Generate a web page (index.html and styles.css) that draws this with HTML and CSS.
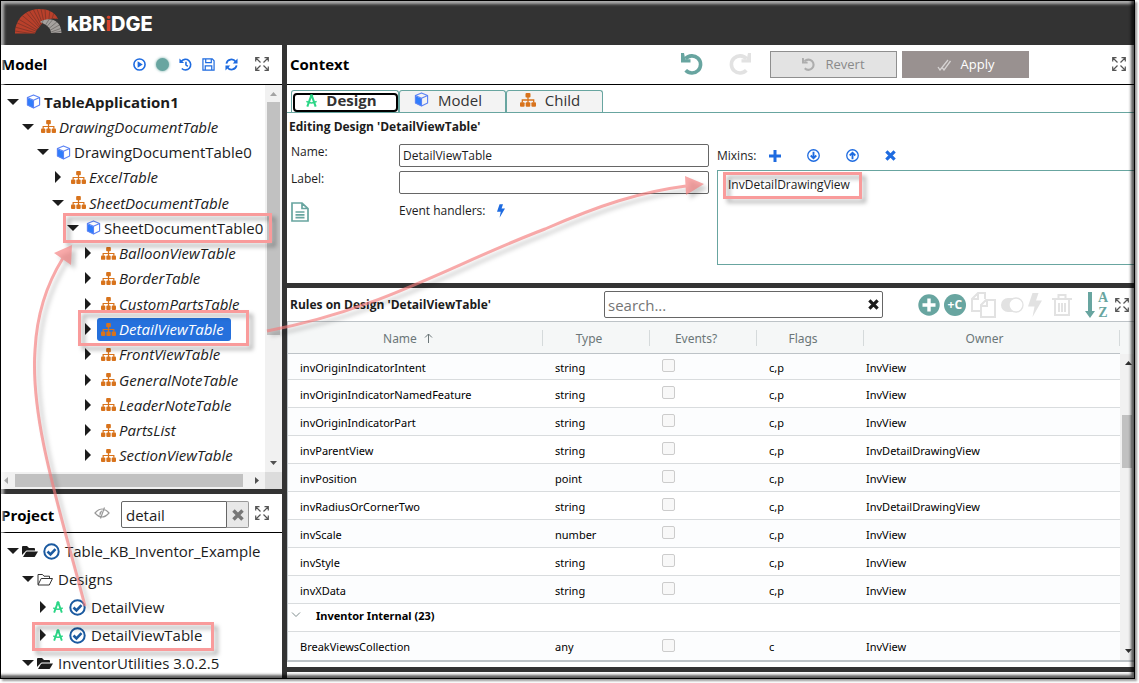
FILE: index.html
```html
<!DOCTYPE html>
<html lang="en">
<head>
<meta charset="utf-8">
<title>kBridge</title>
<link rel="stylesheet" href="styles.css">
</head>
<body>
<svg class="defs" aria-hidden="true">
  <symbol id="down" viewBox="0 0 12 12"><path fill="currentColor" d="M0 3h12L6 9z"/></symbol>
  <symbol id="right" viewBox="0 0 12 12"><path fill="currentColor" d="M3 0v12l6-6z"/></symbol>
  <symbol id="cube" viewBox="0 0 15 16"><path fill="#2f7dfb" d="M1 4.2l6.3 2.6v8L1 11.9z"/><path fill="none" stroke="#5b83f5" stroke-width="1.2" stroke-linejoin="round" d="M7.5 1L14 3.8v8L7.5 15 1 11.8v-8zM1 3.8l6.5 2.8L14 3.8M7.5 6.6V15"/></symbol>
  <symbol id="sitemap" viewBox="0 0 16 14"><g fill="#d8731c"><rect x="5.5" width="5" height="4.6" rx="1"/><rect y="9.2" width="4.6" height="4.6" rx="1"/><rect x="5.7" y="9.2" width="4.6" height="4.6" rx="1"/><rect x="11.4" y="9.2" width="4.6" height="4.6" rx="1"/></g><path fill="none" stroke="#d8731c" stroke-width="1.3" d="M8 4v6M2.3 9.5V7h11.4v2.5"/></symbol>
  <symbol id="design" viewBox="0 0 14 14"><path fill="none" stroke="#2bd686" stroke-width="2.2" d="M7 1L2.500 13.5M7 1l4.500 12.5"/><path fill="none" stroke="#2bd686" stroke-width="1.7" d="M1.500 8q5.500 3.500 11 0"/><circle cx="7" cy="2" r="1.8" fill="#2bd686"/></symbol>
  <symbol id="expand" viewBox="0 0 14 14"><path fill="none" stroke="currentColor" stroke-width="1.200" d="M5.500 5.500L1 1M8.500 5.500L13 1M5.500 8.500L1 13M8.500 8.500L13 13M.7 4.500V.7h3.800M9.500.7h3.800v3.800M.7 9.500v3.800h3.800M13.300 9.500v3.800H9.500"/></symbol>
  <symbol id="undo" viewBox="0 0 22 22"><path fill="none" stroke="currentColor" stroke-width="3.600" d="M4.500 5.800A8.600 8.600 0 1 1 4.700 17.300"/><path fill="currentColor" d="M0 0v9.500h9.500V6.300H4.300L3 0z"/></symbol>
  <symbol id="check" viewBox="0 0 17 17"><circle cx="8.500" cy="8.500" r="7.200" fill="none" stroke="currentColor" stroke-width="2"/><path fill="none" stroke="currentColor" stroke-width="2.600" d="M4.500 8.500l3 3 5-5.300"/></symbol>
  <symbol id="folder" viewBox="0 0 16 13"><path fill="#1c1c1c" d="M0 10V2q0-1 1-1h4l2 2h5q1 0 1 1v1.500H5Q4 5.500 3.400 6.500z"/><path fill="#1c1c1c" d="M1 12l3-5q.3-.6 1-.6h11l-3 5q-.4.600-1 .6z"/></symbol>
  <symbol id="openfolder" viewBox="0 0 16 13"><path fill="none" stroke="#333" stroke-width="1" stroke-linejoin="round" d="M1 11.500V1.500h4.500l1.500 1.700h5.500V5.500M1 12l3.200-6.500h11.300L12.300 12z"/></symbol>
  <symbol id="times" viewBox="0 0 12 12"><path fill="none" stroke="currentColor" stroke-width="3.500" d="M1.500 1.500l9 9M10.500 1.500l-9 9"/></symbol>
  <symbol id="bolt" viewBox="0 0 14 24"><path fill="currentColor" d="M4.500 0h6L8 7.500h6L4.500 24l2-10.500H0z"/></symbol>
</svg>

<div class="window">
  <header class="banner">
    <svg class="mark" viewBox="0 0 47 25" role="img" aria-label="kBridge logo">
      <defs>
        <clipPath id="arch"><path d="M0 24.500C0 9 12 0 24 0c9 0 16 3 19 10-8-2-14 1-18 7-2 3-4 4-5 7.500z"/></clipPath>
        <clipPath id="fan"><path d="M25 13c7-5 21-4 21.500 11H36c0-4-3-8-11-11z"/></clipPath>
      </defs>
      <g clip-path="url(#arch)"><path fill="#b9402b" d="M0 0h47v25H0z"/><path fill="none" stroke="#5a2d25" stroke-width=".5" d="M32 27L0 22M32 27L0 18M32 27L0 13M32 27L0 8M32 27L3 3M32 27L8 0M32 27L13 0M32 27L18 0M32 27L22 0M32 27L26 0M32 27L30 0M32 27L35 0M32 27L40 0M32 27L46 2"/></g>
      <g clip-path="url(#fan)"><path fill="#a5a19e" d="M0 0h47v25H0z"/><path fill="none" stroke="#4c4a49" stroke-width=".5" d="M23 26L30 6M24 26l11-17M25 26L39 9M26 26l17-14M27 26l19-11M28 26l19-7M29 26l18-4"/></g>
    </svg>
    <span class="wordmark">kBR<span class="accent">i</span>DGE</span>
  </header>

  <main class="workspace">
    <div class="side">
      <section class="panel model">
        <header class="bar">
          <h2>Model</h2>
          <div class="tools">
            <button aria-label="Run"><svg width="13" height="13" viewBox="0 0 14 14"><circle cx="7" cy="7" r="6" fill="none" stroke="currentColor" stroke-width="1.700"/><path fill="currentColor" d="M5 3.500v7l5.500-3.500z"/></svg></button>
            <button aria-label="Status"><span class="dot"></span></button>
            <button aria-label="History"><svg width="13" height="13" viewBox="0 0 14 14"><path fill="none" stroke="currentColor" stroke-width="1.700" d="M2.500 3.500A5.700 5.700 0 1 1 3 11.300M7.500 4v3.500l2 1.500"/><path fill="currentColor" d="M.5.500v5h5z"/></svg></button>
            <button aria-label="Save"><svg width="13" height="13" viewBox="0 0 14 14"><path fill="none" stroke="currentColor" stroke-width="1.300" d="M1 1h10l2 2v10H1zM4 1v4h6V1M3.500 13V8.500h7V13"/></svg></button>
            <button aria-label="Refresh"><svg width="13" height="13" viewBox="0 0 14 14"><path fill="none" stroke="currentColor" stroke-width="1.900" d="M1.500 6A5.500 5.500 0 0 1 11.500 4M12.500 8A5.500 5.500 0 0 1 2.500 10"/><path fill="currentColor" d="M13.500.5v5.300H8.300zM.5 13.500V8.200h5.200z"/></svg></button>
          </div>
          <button class="expand" aria-label="Expand"><svg width="14" height="14"><use href="#expand"/></svg></button>
        </header>
        <div class="scroller">
          <ul class="tree">
            <li class="lv0"><svg class="caret"><use href="#down"/></svg><span class="node"><svg class="ico"><use href="#cube"/></svg><b>TableApplication1</b></span></li>
            <li class="lv1"><svg class="caret"><use href="#down"/></svg><span class="node"><svg class="ico"><use href="#sitemap"/></svg><i>DrawingDocumentTable</i></span></li>
            <li class="lv2"><svg class="caret"><use href="#down"/></svg><span class="node"><svg class="ico"><use href="#cube"/></svg><span>DrawingDocumentTable0</span></span></li>
            <li class="lv3"><svg class="caret"><use href="#right"/></svg><span class="node"><svg class="ico"><use href="#sitemap"/></svg><i>ExcelTable</i></span></li>
            <li class="lv3"><svg class="caret"><use href="#down"/></svg><span class="node"><svg class="ico"><use href="#sitemap"/></svg><i>SheetDocumentTable</i></span></li>
            <li class="lv4"><svg class="caret"><use href="#down"/></svg><span class="node"><svg class="ico"><use href="#cube"/></svg><span>SheetDocumentTable0</span></span></li>
            <li class="lv5"><svg class="caret"><use href="#right"/></svg><span class="node"><svg class="ico"><use href="#sitemap"/></svg><i>BalloonViewTable</i></span></li>
            <li class="lv5"><svg class="caret"><use href="#right"/></svg><span class="node"><svg class="ico"><use href="#sitemap"/></svg><i>BorderTable</i></span></li>
            <li class="lv5"><svg class="caret"><use href="#right"/></svg><span class="node"><svg class="ico"><use href="#sitemap"/></svg><i>CustomPartsTable</i></span></li>
            <li class="lv5"><svg class="caret"><use href="#right"/></svg><span class="node selected"><svg class="ico"><use href="#sitemap"/></svg><i>DetailViewTable</i></span></li>
            <li class="lv5"><svg class="caret"><use href="#right"/></svg><span class="node"><svg class="ico"><use href="#sitemap"/></svg><i>FrontViewTable</i></span></li>
            <li class="lv5"><svg class="caret"><use href="#right"/></svg><span class="node"><svg class="ico"><use href="#sitemap"/></svg><i>GeneralNoteTable</i></span></li>
            <li class="lv5"><svg class="caret"><use href="#right"/></svg><span class="node"><svg class="ico"><use href="#sitemap"/></svg><i>LeaderNoteTable</i></span></li>
            <li class="lv5"><svg class="caret"><use href="#right"/></svg><span class="node"><svg class="ico"><use href="#sitemap"/></svg><i>PartsList</i></span></li>
            <li class="lv5"><svg class="caret"><use href="#right"/></svg><span class="node"><svg class="ico"><use href="#sitemap"/></svg><i>SectionViewTable</i></span></li>
          </ul>
          <div class="vscroll">
            <svg viewBox="0 0 17 17"><path fill="#a3a3a3" d="M5 11h7l-3.500-4z"/></svg>
            <div class="track"><span class="thumb tree-thumb"></span></div>
            <svg viewBox="0 0 17 17"><path fill="#505050" d="M5 6h7l-3.500 4z"/></svg>
          </div>
          <div class="hscroll">
            <svg class="left" viewBox="0 0 14 17"><path fill="#a3a3a3" d="M7 5v7L3 8.500z"/></svg>
            <div class="htrack"><span class="hthumb"></span></div>
            <svg viewBox="0 0 17 17"><path fill="#505050" d="M7 5v7l4-3.500z"/></svg>
          </div>
          <div class="corner"></div>
        </div>
      </section>

      <section class="panel project">
        <header class="bar">
          <h2>Project</h2>
          <button class="eye" aria-label="Toggle hidden"><svg width="16" height="12" viewBox="0 0 16 12"><path fill="none" stroke="currentColor" stroke-width="1.200" d="M1 6q7-8 14 0-7 8-14 0zM10.500.5l-4 11"/><path fill="currentColor" d="M8.500 3L6 9Q4 5 8.500 3z"/></svg></button>
          <div class="filter">
            <input type="text" value="detail" aria-label="Filter project">
            <button aria-label="Clear filter"><svg width="12" height="12"><use href="#times"/></svg></button>
          </div>
          <button class="expand" aria-label="Expand"><svg width="14" height="14"><use href="#expand"/></svg></button>
        </header>
        <ul class="files">
          <li class="lv0"><svg class="caret"><use href="#down"/></svg><svg class="folder"><use href="#folder"/></svg><svg class="check"><use href="#check"/></svg><span>Table_KB_Inventor_Example</span></li>
          <li class="lv1"><svg class="caret"><use href="#down"/></svg><svg class="folder"><use href="#openfolder"/></svg><span>Designs</span></li>
          <li class="lv2"><svg class="caret"><use href="#right"/></svg><svg class="letter"><use href="#design"/></svg><svg class="check"><use href="#check"/></svg><span>DetailView</span></li>
          <li class="lv2"><svg class="caret"><use href="#right"/></svg><svg class="letter"><use href="#design"/></svg><svg class="check"><use href="#check"/></svg><span>DetailViewTable</span></li>
          <li class="lv1"><svg class="caret"><use href="#down"/></svg><svg class="folder"><use href="#folder"/></svg><span>InventorUtilities 3.0.2.5</span></li>
        </ul>
      </section>
    </div>

    <div class="content">
      <section class="panel context">
        <header class="bar">
          <h2>Context</h2>
          <div class="history">
            <button class="teal" aria-label="Undo"><svg width="22" height="22"><use href="#undo"/></svg></button>
            <button class="faint" aria-label="Redo"><svg class="flip" width="22" height="22"><use href="#undo"/></svg></button>
          </div>
          <div class="actions">
            <button class="revert"><svg width="13" height="13"><use href="#undo"/></svg>Revert</button>
            <button class="apply"><svg width="14" height="13" viewBox="0 0 14 13"><path fill="none" stroke="currentColor" stroke-width="1.300" d="M1 9l2 3L11 2M5.500 10l1.500 2L13.500 3"/></svg>Apply</button>
          </div>
          <button class="expand" aria-label="Expand"><svg width="14" height="14"><use href="#expand"/></svg></button>
        </header>
        <nav class="tabs">
          <button class="tab active"><span><svg width="13" height="13"><use href="#design"/></svg>Design</span></button>
          <button class="tab"><svg width="15" height="15"><use href="#cube"/></svg>Model</button>
          <button class="tab"><svg width="16" height="14"><use href="#sitemap"/></svg>Child</button>
        </nav>
        <h3>Editing Design 'DetailViewTable'</h3>
        <form class="editor">
          <div class="fields">
            <label for="name">Name:</label><input id="name" type="text" value="DetailViewTable">
            <label for="label">Label:</label><input id="label" type="text">
            <button class="doc teal" type="button" aria-label="Notes"><svg width="18" height="20" viewBox="0 0 18 20"><path fill="none" stroke="currentColor" stroke-width="1.700" d="M1 1h10l6 5.500V19H1zM11 1v5.500h6M4.500 10h9M4.500 12.800h9M4.500 15.600h9"/></svg></button>
            <div class="events">Event handlers: <button type="button" aria-label="Add handler"><svg width="8" height="14"><use href="#bolt"/></svg></button></div>
          </div>
          <div class="mixins">
            <div class="mixbar">
              <span>Mixins:</span>
              <button type="button" aria-label="Add"><svg width="12" height="12" viewBox="0 0 12 12"><path stroke="currentColor" stroke-width="3" d="M6 0v12M0 6h12"/></svg></button>
              <button type="button" aria-label="Move down"><svg width="13" height="13" viewBox="0 0 14 14"><circle cx="7" cy="7" r="6.200" fill="none" stroke="currentColor" stroke-width="1.400"/><path fill="none" stroke="currentColor" stroke-width="2" d="M7 3v7M4 7l3 3 3-3"/></svg></button>
              <button type="button" aria-label="Move up"><svg width="13" height="13" viewBox="0 0 14 14"><circle cx="7" cy="7" r="6.200" fill="none" stroke="currentColor" stroke-width="1.400"/><path fill="none" stroke="currentColor" stroke-width="2" d="M7 11V4M4 7l3-3 3 3"/></svg></button>
              <button type="button" aria-label="Remove"><svg width="11" height="11"><use href="#times"/></svg></button>
            </div>
            <ul class="mixlist"><li>InvDetailDrawingView</li></ul>
          </div>
        </form>
      </section>

      <section class="panel rules">
        <header class="rulebar">
          <h3>Rules on Design 'DetailViewTable'</h3>
          <div class="search"><input type="text" placeholder="search..." aria-label="Search rules"><button aria-label="Clear search"><svg width="11" height="11"><use href="#times"/></svg></button></div>
          <div class="ruletools">
            <button class="teal" aria-label="Add rule"><svg width="22" height="22" viewBox="0 0 22 22"><circle cx="11" cy="11" r="10.700" fill="currentColor"/><path stroke="#fff" stroke-width="3.400" d="M11 4.500v13M4.500 11h13"/></svg></button>
            <button class="badge" aria-label="Add child rule">+C</button>
            <button class="faint" aria-label="Copy"><svg width="25" height="26" viewBox="0 0 25 26"><path fill="none" stroke="currentColor" stroke-width="2" d="M10 19H1V7l6-6h7v6M7 1v6H1M10 13l5-5h9v17H10zM16 8v6h-6"/></svg></button>
            <button class="faint" aria-label="Toggle"><svg width="24" height="16" viewBox="0 0 24 16"><path fill="currentColor" d="M8 1h8v14H8A7 7 0 0 1 8 1z"/><circle cx="16" cy="8" r="7" fill="#fff" stroke="currentColor" stroke-width="1.300"/></svg></button>
            <button class="faint" aria-label="Events"><svg width="14" height="24"><use href="#bolt"/></svg></button>
            <button class="faint trash" aria-label="Delete"><svg width="20" height="22" viewBox="0 0 20 22"><path fill="none" stroke="currentColor" stroke-width="2" d="M0 5h20M3 5v16h14V5M6.500 4V1h7v3M7 9v9M10 9v9M13 9v9"/></svg></button>
            <button class="teal sort" aria-label="Sort A to Z"><svg width="10" height="26" viewBox="0 0 10 26"><path fill="currentColor" d="M3 0h4v19h3l-5 7-5-7h3z"/></svg><span><b>A</b><b>Z</b></span></button>
            <button class="expand" aria-label="Expand"><svg width="14" height="14"><use href="#expand"/></svg></button>
          </div>
        </header>
        <div class="grid">
          <table>
            <colgroup><col class="c-name"><col class="c-mid"><col class="c-mid"><col class="c-mid"><col></colgroup>
            <thead><tr><th>Name <svg class="asc" width="9" height="10" viewBox="0 0 9 10"><path fill="none" stroke="currentColor" d="M4.500 10V1M1 4.500L4.500 1 8 4.500"/></svg></th><th>Type</th><th>Events?</th><th>Flags</th><th>Owner</th></tr></thead>
            <tbody>
              <tr class="partial"><td>invOriginIndicatorIntent</td><td>string</td><td><input type="checkbox" disabled aria-label="Events"></td><td>c,p</td><td>InvView</td></tr>
              <tr><td>invOriginIndicatorNamedFeature</td><td>string</td><td><input type="checkbox" disabled aria-label="Events"></td><td>c,p</td><td>InvView</td></tr>
              <tr><td>invOriginIndicatorPart</td><td>string</td><td><input type="checkbox" disabled aria-label="Events"></td><td>c,p</td><td>InvView</td></tr>
              <tr><td>invParentView</td><td>string</td><td><input type="checkbox" disabled aria-label="Events"></td><td>c,p</td><td>InvDetailDrawingView</td></tr>
              <tr><td>invPosition</td><td>point</td><td><input type="checkbox" disabled aria-label="Events"></td><td>c,p</td><td>InvView</td></tr>
              <tr><td>invRadiusOrCornerTwo</td><td>string</td><td><input type="checkbox" disabled aria-label="Events"></td><td>c,p</td><td>InvDetailDrawingView</td></tr>
              <tr><td>invScale</td><td>number</td><td><input type="checkbox" disabled aria-label="Events"></td><td>c,p</td><td>InvView</td></tr>
              <tr><td>invStyle</td><td>string</td><td><input type="checkbox" disabled aria-label="Events"></td><td>c,p</td><td>InvView</td></tr>
              <tr><td>invXData</td><td>string</td><td><input type="checkbox" disabled aria-label="Events"></td><td>c,p</td><td>InvView</td></tr>
              <tr class="group"><td colspan="5"><svg width="10" height="6" viewBox="0 0 10 6"><path fill="none" stroke="#7f8c8d" d="M1 .5l4 4 4-4"/></svg>Inventor Internal (23)</td></tr>
              <tr><td>BreakViewsCollection</td><td>any</td><td><input type="checkbox" disabled aria-label="Events"></td><td>c</td><td>InvView</td></tr>
            </tbody>
          </table>
          <div class="vscroll rules-scroll">
            <svg viewBox="0 0 17 17"><path fill="#303030" d="M5 11h7l-3.500-4z"/></svg>
            <div class="track"><span class="thumb rules-thumb"></span></div>
            <svg viewBox="0 0 17 17"><path fill="#303030" d="M5 6h7l-3.500 4z"/></svg>
          </div>
        </div>
      </section>
      <div class="next"></div>
    </div>
  </main>
  <div class="bevel"></div>
  <svg class="callouts" width="1135" height="679" viewBox="0 0 1135 679" aria-hidden="true">
    <g fill="none" stroke="#f99b9b" stroke-width="3">
      <path d="M64.500 214.500h206v27h-206zM79.500 311.500h168v33h-168zM33.500 623.500h179v26h-179zM724.500 173.500h136v24h-136z"/>
    </g>
    <g class="arrow">
      <path fill="none" stroke="#f47c7c" stroke-width="3" d="M85 606C60 510 30 420 35 350c2-40 13-68 28-92"/>
      <path fill="#f47c7c" d="M72 245l-18 8 17 12z"/>
    </g>
    <g class="arrow">
      <path fill="none" stroke="#f47c7c" stroke-width="3" d="M267 331C380 310 450 265 545 229c55-24 95-37 141-43"/>
      <path fill="#f47c7c" d="M704 184l-19-8 1 19z"/>
    </g>
  </svg>
</div>
</body>
</html>
```

FILE: styles.css
```css
* { box-sizing: border-box; }
body {
  margin: 0;
  height: 100vh;
  padding: 0 4px 4px 0;
  overflow: hidden;
  background: #fff;
  color: #1c1c1c;
  font: 15px/20px "Open Sans", "Noto Sans", sans-serif;
}
h2, h3, ul { margin: 0; padding: 0; list-style: none; }
button { padding: 0; border: 0; background: none; color: #1e6be0; font: inherit; display: flex; align-items: center; justify-content: center; }
input { font: inherit; color: inherit; }
.defs { position: absolute; width: 0; height: 0; }

.window {
  position: relative;
  height: 100%;
  display: flex;
  flex-direction: column;
  border: 1px solid #000;
  background: #333;
  box-shadow: 2px 2px 2px #999;
}
.bevel {
  position: absolute;
  inset: 0;
  pointer-events: none;
  box-shadow: inset -3px -3px 3px rgba(0, 0, 0, .65), inset 3px 3px 3px rgba(255, 255, 255, .6);
}
.callouts { position: absolute; top: -1px; left: -1px; pointer-events: none; filter: drop-shadow(4px 4px 2px rgba(0, 0, 0, .3)); }
.arrow { opacity: .65; }

.banner { flex: none; height: 44px; display: flex; align-items: center; gap: 5px; padding: 2px 14px 0; }
.mark { width: 47px; height: 25px; margin-bottom: 6px; }
.wordmark { color: #fff; font: 800 20px/20px Inter, "Open Sans", sans-serif; }
.accent { color: #d8432b; }

.workspace { flex: 1; min-height: 0; display: grid; grid-template-columns: 281px 1fr; gap: 5px; }
.side { display: grid; grid-template-rows: 1fr 184px; gap: 5px; min-height: 0; }
.content { display: grid; grid-template-rows: 238px 1fr 6px; gap: 5px; min-width: 0; min-height: 0; }
.panel { background: #fff; min-width: 0; min-height: 0; display: flex; flex-direction: column; overflow: hidden; }
.next { background: #fff; }

.bar { flex: none; height: 40px; display: flex; align-items: center; border-bottom: 1px solid #000; }
.bar h2 { font-size: 15px; font-weight: 700; color: #000; flex: 1; }
.side .bar { padding: 0 13px 1px 0; }
.side .project .bar { height: 39px; padding-bottom: 0; }
.project h2 { padding-top: 3px; }
.expand { color: #555; }
.tools { display: flex; gap: 10px; margin-right: 17px; }
.dot { width: 13px; height: 13px; border-radius: 50%; background: #68a5a0; box-shadow: 0 0 3px #68a5a0; }

.scroller { flex: 1; min-height: 0; display: grid; grid-template: 1fr 17px / 1fr 17px; }
.tree { display: grid; grid-auto-rows: 1fr; padding: 4px 0; min-height: 0; overflow: hidden; }
.tree li, .files li { display: flex; align-items: center; white-space: nowrap; min-height: 0; }
.lv0 { padding-left: 6px; }
.lv1 { padding-left: 21px; }
.lv2 { padding-left: 36px; }
.lv3 { padding-left: 51px; }
.lv4 { padding-left: 66px; }
.lv5 { padding-left: 81px; }
.caret { width: 12px; height: 12px; flex: none; }
.node { display: flex; align-items: center; gap: 3px; height: 23px; margin-left: 3px; padding: 0 7px 0 4px; border-radius: 3px; }
.ico { width: 15px; height: 15px; flex: none; }
.selected { background: #2570dc; color: #fff; }
.vscroll { width: 17px; background: #f1f1f1; display: flex; flex-direction: column; overflow: hidden; }
.vscroll svg, .hscroll svg { width: 17px; height: 17px; flex: none; }
.hscroll .left { width: 14px; }
.track { flex: 1; display: flex; flex-direction: column; padding: 0 2px; }
.thumb { background: #c1c1c1; }
.tree-thumb { height: 66%; }
.hscroll { height: 17px; background: #f1f1f1; display: flex; }
.htrack { flex: 1; display: flex; padding: 2px 0; }
.hthumb { background: #c1c1c1; width: 98%; }
.corner { background: #dcdcdc; }

.eye { color: #999; margin-right: 11px; }
.filter { display: flex; height: 27px; margin-right: 6px; padding: 0; }
.project .bar .filter { margin-top: 3px; }
.filter input { width: 106px; border: 1px solid #666; border-radius: 2px 0 0 2px; padding: 0 4px; }
.filter button { width: 22px; border: 1px solid #999; border-left: 0; background: #e8e8e8; color: #777; border-radius: 0 2px 2px 0; }
.files { padding-top: 4px; }
.files li { height: 28px; gap: 5px; }
.files .caret { margin-right: -2px; }
.folder { width: 16px; height: 13px; flex: none; }
.letter { width: 12px; height: 14px; flex: none; }
.check { width: 17px; height: 17px; flex: none; color: #1b5aa0; }

.teal { color: #68a5a0; }
.faint { color: #e2e2e2; }
.flip { transform: scaleX(-1); }
.content .bar { padding: 0 8px 1px 3px; }
.history { display: flex; gap: 26px; margin-right: 19px; }
.actions { display: flex; gap: 5px; margin-right: 83px; }
.actions button { width: 127px; height: 27px; gap: 10px; font-size: 13px; }
.actions .revert { border: 1px solid #8f8f8f; background: #e3e3e3; color: #8a8a8a; }
.actions .apply { background: #999190; color: #fff; }
.actions svg { opacity: .6; }

.tabs { display: flex; margin-top: 5px; padding-left: 4px; border-bottom: 1px solid #68a5a0; }
.tab { height: 22px; gap: 9px; border: 1px solid #68a5a0; border-bottom: 0; border-radius: 3px 3px 0 0; background: #f3f3f3; color: #333; width: 97px; padding: 0 9px 4px 0; }
.tab:nth-child(2) { width: 107px; }
.tab.active { width: 108px; background: #fff; font-weight: 700; padding: 1px 0 0; }
.tab.active span { display: flex; align-items: center; justify-content: center; gap: 8px; height: 19px; width: 105px; border: 2px solid #000; border-radius: 4px; padding: 0 8px 4px 0; }
h3 { font-size: 12px; font-weight: 700; }
.context h3 { padding: 4px 2px 0; }
.editor { flex: 1; display: grid; grid-template-columns: 421px 1fr; gap: 5px; padding: 6px 0 18px 4px; font-size: 12px; min-height: 0; }
.fields { display: grid; grid-template-columns: 108px 1fr; grid-template-rows: 23px 23px 23px; row-gap: 4px; align-items: start; align-content: start; padding-top: 1px; }
.fields label { line-height: 16px; }
.fields input { height: 23px; width: 310px; border: 1px solid #666; border-radius: 2px; padding: 0 3px; }
.doc { margin-top: 4px; width: 18px; }
.events { display: flex; gap: 12px; align-items: center; padding-top: 3px; }
.mixins { display: flex; flex-direction: column; min-height: 0; }
.mixbar { height: 27px; display: flex; align-items: center; gap: 26px; padding-bottom: 2px; }
.mixbar span { margin-right: -13px; }
.mixlist { flex: 1; border: 1px solid #68a5a0; border-right: 0; padding: 4px 10px; }

.rulebar { flex: none; height: 34px; display: flex; align-items: center; padding: 0 5px 0 3px; border-bottom: 1px solid #bdc3c7; }
.rulebar h3 { flex: 0 0 314px; }
.search { flex: 0 1 279px; height: 27px; display: flex; border: 1px solid #666; border-radius: 2px; padding: 0 3px; }
.search input { flex: 1; min-width: 0; border: 0; padding: 0; outline: 0; }
.search button { color: #1c1c1c; }
.ruletools { margin-left: auto; display: flex; align-items: center; gap: 4px; }
.badge { width: 22px; height: 22px; margin-right: 1px; border-radius: 50%; background: #68a5a0; color: #fff; font-size: 12px; font-weight: 700; }
.trash { margin: 0 9px 0 6px; }
.sort { gap: 3px; margin-right: 3px; }
.sort span { display: flex; flex-direction: column; font: 700 14px/15px "Liberation Serif", serif; }

.rules { padding-bottom: 5px; }
.grid { flex: 1; min-height: 0; display: flex; border-bottom: 2px solid #bdc3c7; overflow: hidden; border-left: 1px solid #bdc3c7; }
table { flex: 1; width: 100%; height: 100%; table-layout: fixed; border-collapse: separate; border-spacing: 0; color: #000; font: 12px/16px "Noto Sans", "Open Sans", sans-serif; }
.c-name { width: 255px; }
.c-mid { width: 107px; }
th { height: 32px; padding: 2px 15px 0 0; font-weight: 400; color: #6b7678; border-bottom: 1px solid #bdc3c7; background: linear-gradient(#d5dadb, #d5dadb) right center / 1px 16px no-repeat #f5f7f7; }
.asc { margin-left: 4px; }
td { height: 28px; padding: 2px 0 0 12px; border-bottom: 1px solid #d9dcde; white-space: nowrap; font-size: 11px; }
td:last-child { padding-left: 2px; }
.partial td { height: 26px; }
tbody tr:nth-child(odd) { background: #fcfdfe; }
tbody tr:last-child td { border-bottom: 0; }
.group td:last-child { font-weight: 700; padding: 0 0 3px 3px; }
.group svg { margin-right: 15px; vertical-align: 2px; }
td input { appearance: none; display: block; width: 13px; height: 13px; margin: 0 0 4px; border: 1px solid #ccc; border-radius: 2px; background: #f8f8f8; }
.rules-scroll { width: 14px; border-top: 32px solid #f5f7f7; }
.rules-thumb { height: 53px; margin-top: 44px; }
```
